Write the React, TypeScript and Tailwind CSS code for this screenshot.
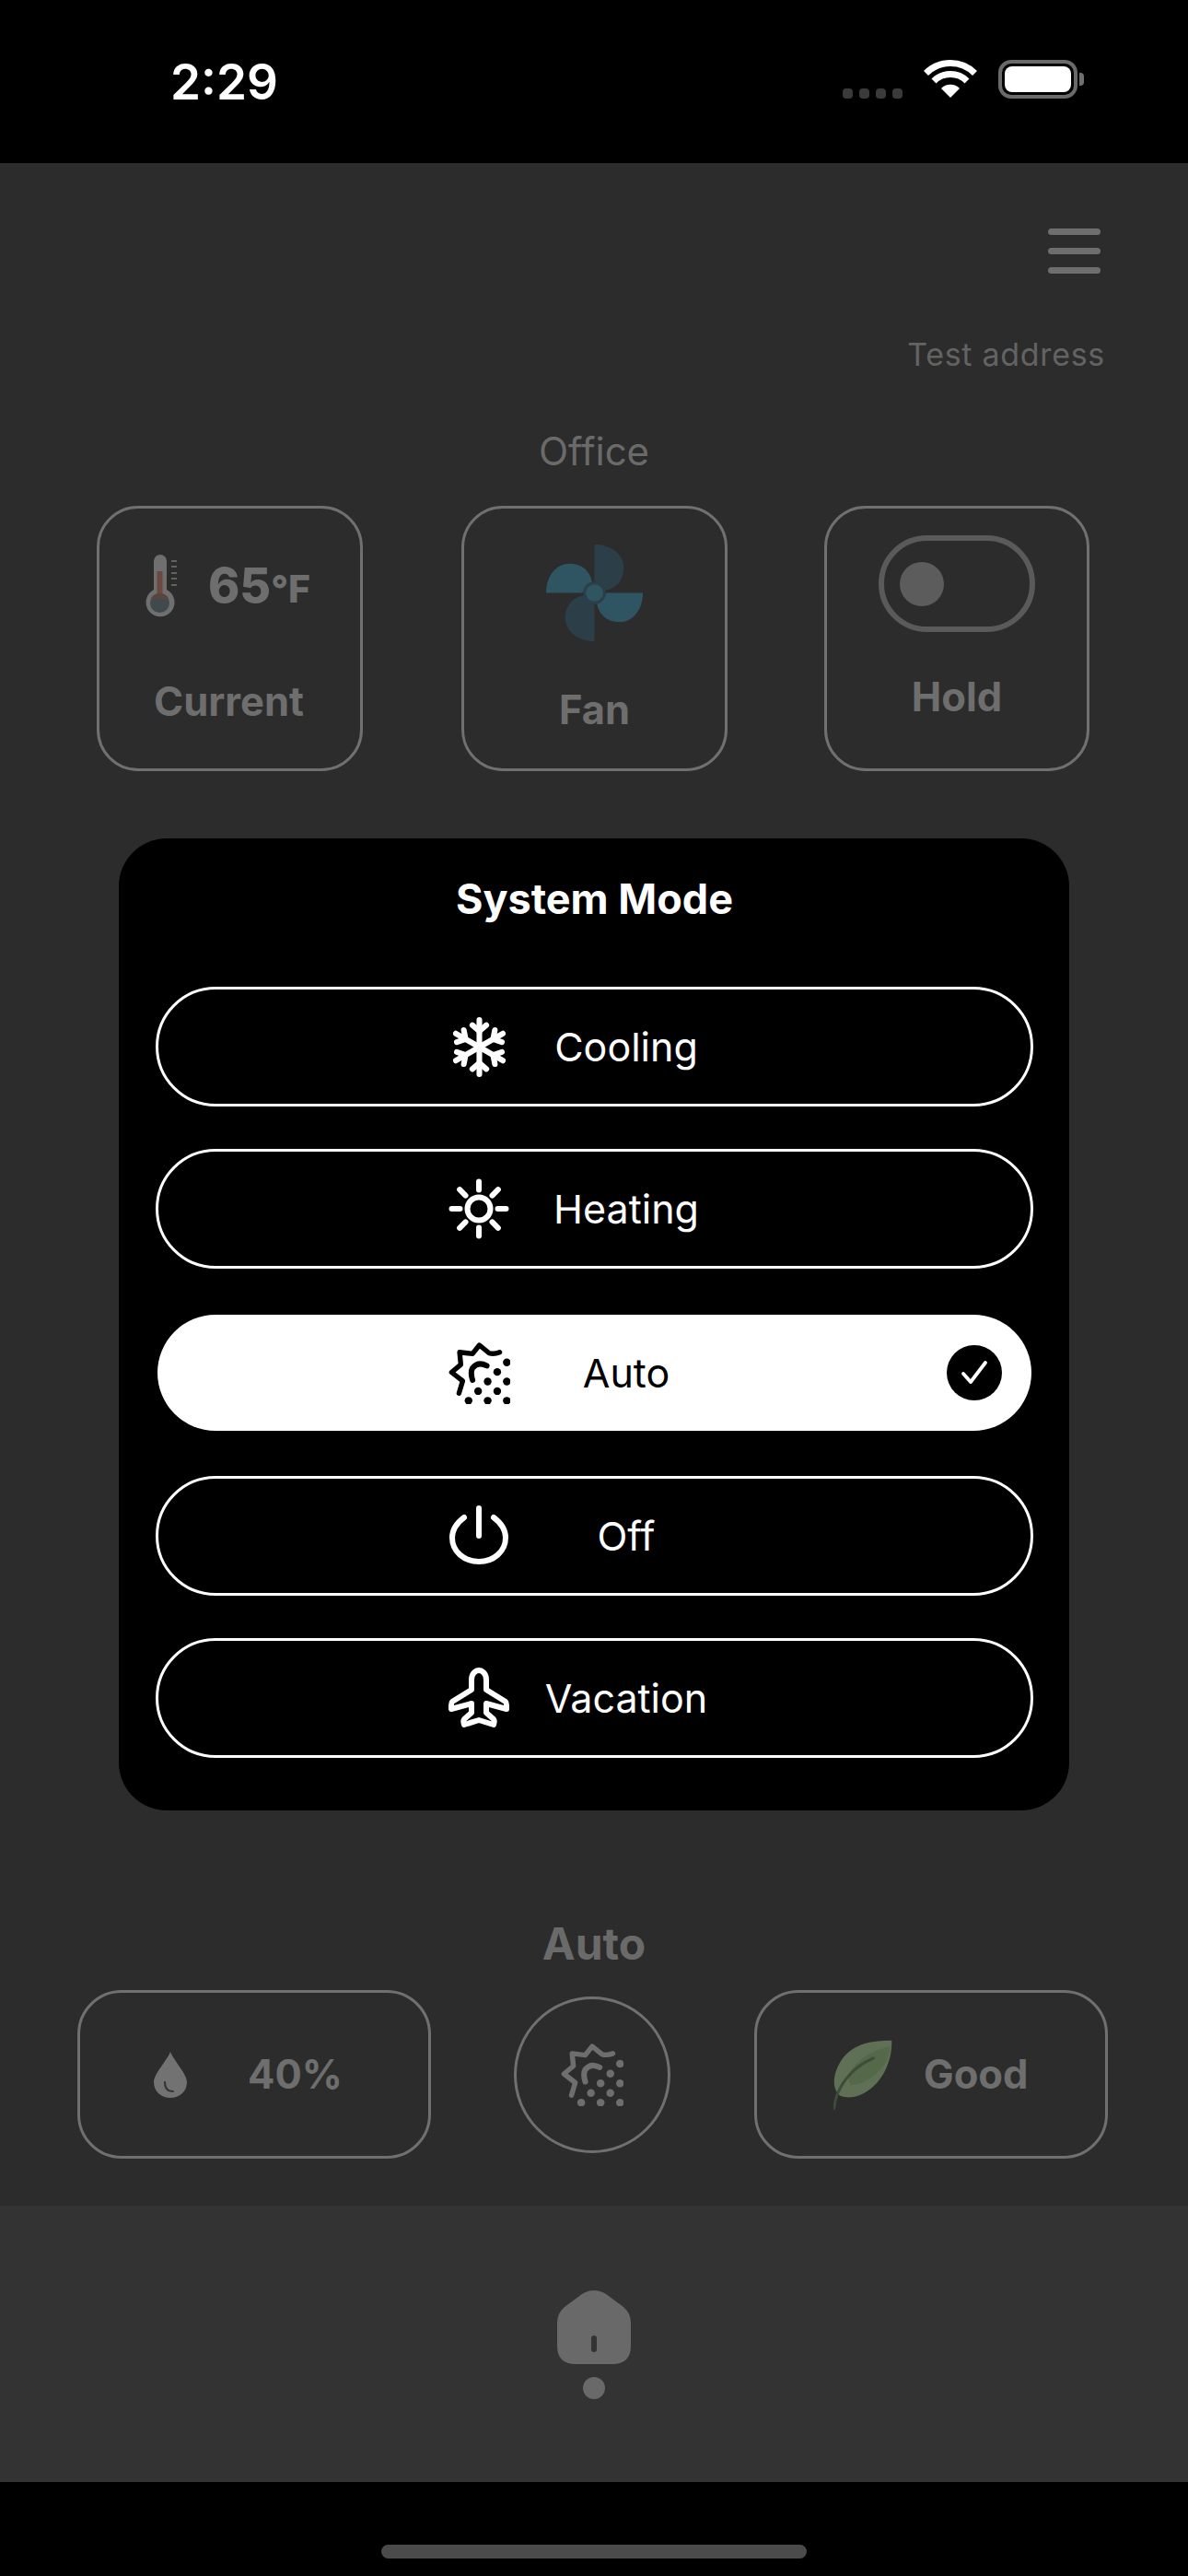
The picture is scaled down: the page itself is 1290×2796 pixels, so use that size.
import { ReactNode } from "react";

function AutoIcon({ className }: { className?: string }) {
  const dots = [
    [239, 80], [208, 111], [177, 142], [239, 142], [146, 173],
    [208, 173], [115, 204], [177, 204], [239, 204],
  ];
  return (
    <svg viewBox="50 15 200 200" className={className} fill="none" stroke="currentColor" strokeLinecap="round" strokeLinejoin="round">
      <path d="M216 47 Q198 54 182 50 L150 24 L128 52 L86 47 L90 87 L60 112 L96 140 L84 180" strokeWidth="16" />
      <path d="M174 91 Q146 76 128 98 Q120 112 128 137" strokeWidth="18" />
      {dots.map(([x, y]) => (
        <circle key={`${x}-${y}`} cx={x} cy={y} r="12.5" fill="currentColor" stroke="none" />
      ))}
    </svg>
  );
}

function SnowIcon() {
  return (
    <svg viewBox="0 0 60 66" className="w-[61px] h-[67px]" fill="none" stroke="currentColor" strokeWidth="6" strokeLinecap="round" strokeLinejoin="round">
      {[0, 60, 120, 180, 240, 300].map((a) => (
        <g key={a} transform={`rotate(${a} 30 33)`}>
          <path d="M30 33V4" />
          <path d="M22.5 9.5L30 16L37.5 9.5" />
        </g>
      ))}
    </svg>
  );
}

function SunIcon() {
  return (
    <svg viewBox="0 0 66 66" className="w-[66px] h-[66px]" fill="none" stroke="currentColor" strokeWidth="6" strokeLinecap="round">
      <circle cx="33" cy="33" r="12.5" />
      {[0, 45, 90, 135, 180, 225, 270, 315].map((a) => (
        <path key={a} d="M33 3.5V12.5" transform={`rotate(${a} 33 33)`} />
      ))}
    </svg>
  );
}

function PowerIcon() {
  return (
    <svg viewBox="0 0 64 64" className="w-[64px] h-[64px] mb-[3px]" fill="none" stroke="currentColor" strokeWidth="6" strokeLinecap="round">
      <path d="M32 3V33" />
      <path d="M16 13C8 19 3 26 3 35C3 50 16 61 32 61C48 61 61 50 61 35C61 26 56 19 48 13" />
    </svg>
  );
}

function PlaneIcon() {
  return (
    <svg viewBox="0 0 66 66" className="w-[66px] h-[66px]" fill="none" stroke="currentColor" strokeWidth="6" strokeLinecap="round" strokeLinejoin="round">
      <path d="M41 24L62 37C63 38 63 39 63 41V45L41 39V49L49 56C50 57 50 59 49 62L33 57L17 62C16 59 16 57 17 56L25 49V39L3 45V41C3 39 3 38 4 37L25 24V13C25 7 29 3 33 3C37 3 41 7 41 13Z" />
    </svg>
  );
}

function Thermometer() {
  return (
    <svg viewBox="0 0 34 68" className="w-[34px] h-[68px] shrink-0">
      <path d="M9 38V7a7 7 0 0 1 14 0V38a15.5 15.5 0 1 1-14 0Z" fill="#6f6f6f" />
      <circle cx="15.5" cy="52.5" r="10.5" fill="#3f4a4e" />
      <rect x="12.5" y="18" width="6" height="30" fill="#6a4a40" />
      <path d="M5.6 49a10.5 10.5 0 0 1 19.8 0Z" fill="#574640" />
      {[6, 12, 19, 25, 32].map((y) => (
        <rect key={y} x="28" y={y} width="6" height="2" fill="#626262" />
      ))}
    </svg>
  );
}

function Fan() {
  return (
    <svg viewBox="-157 -157 314 314" className="w-[105px] h-[105px]">
      {[
        { a: 0, c: "#2c3e47" },
        { a: 90, c: "#2f5563" },
        { a: 180, c: "#2c3e47" },
        { a: 270, c: "#2f5563" },
      ].map(({ a, c }) => (
        <path key={a} transform={`rotate(${a})`} d="M0 -157C55 -157 95 -125 95 -80C95 -40 70 -15 37 -8L0 -40Z" fill={c} />
      ))}
      <circle r="37" fill="#2c3e47" />
      <circle r="28" fill="#2f5563" />
    </svg>
  );
}

function Leaf() {
  return (
    <svg viewBox="78 38 192 228" className="w-[64px] h-[76px] shrink-0">
      <path d="M268 40C200 40 130 50 95 120C70 170 80 205 100 220C150 240 220 200 250 130C265 95 268 70 268 40Z" fill="#5f7054" />
      <path d="M262 60C220 70 170 90 140 130C125 150 125 170 135 185C180 185 225 150 250 110C258 90 261 75 262 60Z" fill="#53694a" />
      <path d="M80 262C85 200 130 130 208 98" fill="none" stroke="#3e4d3a" strokeWidth="9" strokeLinecap="round" />
    </svg>
  );
}

function Drop() {
  return (
    <svg viewBox="0 0 36 50" className="w-[36px] h-[50px] shrink-0">
      <path d="M18 0C22 10 36 24 36 33C36 43 28 50 18 50C8 50 0 43 0 33C0 24 14 10 18 0Z" fill="#727272" />
      <path d="M12 33C12 39 15 43 21 43" fill="none" stroke="#333333" strokeWidth="2" strokeLinecap="round" />
    </svg>
  );
}

function StatusIcons() {
  return (
    <div className="flex items-end">
      <div className="flex gap-[7px] mr-[23px]">
        {[0, 1, 2, 3].map((i) => (
          <div key={i} className="w-[11px] h-[11px] rounded-[4px] bg-[#3a3a3a]" />
        ))}
      </div>
      <svg viewBox="0 0 58 42" className="w-[58px] h-[42px] mr-[23px]">
        <path d="M2.5 14.5a37.5 37.5 0 0 1 53 0" fill="none" stroke="#fff" strokeWidth="7" />
        <path d="M11 23a25.5 25.5 0 0 1 36 0" fill="none" stroke="#fff" strokeWidth="7" />
        <path d="M19 31a14 14 0 0 1 20 0L29 41Z" fill="#fff" />
      </svg>
      <div className="flex items-center">
        <div className="w-[86px] h-[42px] rounded-[14px] border-4 border-[#6a6a6a] p-[3px]">
          <div className="w-full h-full rounded-[8px] bg-white" />
        </div>
        <div className="w-[5px] h-[14px] rounded-r-[4px] bg-[#6f6f6f] ml-[2px]" />
      </div>
    </div>
  );
}

function ModeRow({ icon, label, mt, selected }: { icon: ReactNode; label: string; mt: string; selected?: boolean }) {
  return (
    <div
      className={`flex items-center rounded-full ${mt} ${
        selected ? "h-[126px] mx-[2px] bg-white text-black pl-[314px]" : "h-[130px] border-[3px] border-white text-white pl-[313px]"
      }`}
    >
      <div className="w-[70px] flex justify-center shrink-0">{icon}</div>
      <div className="w-[250px] text-center text-[43px] leading-none font-[420]">{label}</div>
      {selected && (
        <div className="ml-auto mr-[32px] w-[60px] h-[60px] rounded-full bg-black flex items-center justify-center">
          <svg viewBox="0 0 32 32" className="w-[32px] h-[32px]" fill="none" stroke="#fff" strokeWidth="3.8" strokeLinecap="round" strokeLinejoin="round">
            <path d="M4 17L12 26L28 5" />
          </svg>
        </div>
      )}
    </div>
  );
}

export default function App() {
  return (
    <div className="relative w-[1290px] h-[2796px] flex flex-col bg-[#2c2c2c] overflow-hidden [font-family:Inter,sans-serif]">
      {/* Status bar */}
      <div className="h-[177px] shrink-0 bg-black flex items-start justify-between pl-[185px] pr-[113px] pt-[65px]">
        <span className="text-[53px] leading-[48px] font-semibold text-white">2:29</span>
        <StatusIcons />
      </div>

      {/* Screen behind the sheet */}
      <div className="flex-1 flex flex-col">
        <div className="flex justify-end pr-[95px] pt-[71px]">
          <div className="flex flex-col gap-[14px] w-[57px]">
            <div className="h-[7px] rounded-full bg-[#6e6e6e]" />
            <div className="h-[7px] rounded-full bg-[#6e6e6e]" />
            <div className="h-[7px] rounded-full bg-[#6e6e6e]" />
          </div>
        </div>
        <div className="mt-[68px] pr-[90px] text-right text-[34px] leading-[40px] tracking-[0.7px] text-[#636363]">Test address</div>
        <div className="mt-[60px] text-center text-[42px] leading-[50px] text-[#6a6a6a]">Office</div>

        <div className="mt-[34px] pl-[105px] flex">
          <div className="w-[289px] h-[288px] rounded-[45px] border-[3px] border-[#707070] flex flex-col items-center pt-[50px]">
            <div className="flex items-center gap-[34px] pr-[4px]">
              <Thermometer />
              <div className="flex items-baseline font-extrabold text-[#6e6e6e] leading-none">
                <span className="text-[52px]">65</span>
                <span className="text-[41px]">°F</span>
              </div>
            </div>
            <div className="mt-[70px] text-[43.5px] leading-none font-bold text-[#6e6e6e] pr-[2px]">Current</div>
          </div>
          <div className="ml-[107px] w-[289px] h-[288px] rounded-[45px] border-[3px] border-[#707070] flex flex-col items-center pt-[39px]">
            <Fan />
            <div className="mt-[53px] text-[43.5px] leading-none font-bold text-[#6e6e6e]">Fan</div>
          </div>
          <div className="ml-[105px] w-[288px] h-[288px] rounded-[45px] border-[3px] border-[#707070] flex flex-col items-center pt-[29px]">
            <div className="w-[170px] h-[105px] rounded-full border-[6px] border-[#5a5a5a] flex items-center pl-[17px]">
              <div className="w-[48px] h-[48px] rounded-full bg-[#5c5c5c]" />
            </div>
            <div className="mt-[49px] text-[43.5px] leading-none font-bold text-[#6e6e6e]">Hold</div>
          </div>
        </div>

        <div className="mt-[1247px] text-center text-[48px] leading-[52px] font-bold text-[#6a6a6a]">Auto</div>
        <div className="mt-[24px] pl-[84px] flex items-center">
          <div className="w-[384px] h-[183px] rounded-[48px] border-[3px] border-[#707070] flex items-center pl-[80px] gap-[66px]">
            <Drop />
            <span className="text-[43.5px] leading-none font-bold text-[#6e6e6e]">40%</span>
          </div>
          <div className="ml-[90px] w-[170px] h-[170px] rounded-full border-[3px] border-[#707070] flex items-center justify-center text-[#6e6e6e]">
            <AutoIcon className="w-[68px] h-[68px]" />
          </div>
          <div className="ml-[91px] w-[384px] h-[183px] rounded-[48px] border-[3px] border-[#707070] flex items-center pl-[83px] gap-[34px]">
            <Leaf />
            <span className="text-[43.5px] leading-none font-bold text-[#6e6e6e]">Good</span>
          </div>
        </div>
      </div>

      {/* Bottom nav */}
      <div className="h-[300px] shrink-0 bg-[#333333] flex flex-col items-center pt-[92px]">
        <svg viewBox="0 0 80 80" className="w-[80px] h-[80px]">
          <path d="M27 4Q40 -4 53 4L72 18Q80 25 80 35V60Q80 80 60 80H20Q0 80 0 60V35Q0 25 8 18Z" fill="#696969" />
          <rect x="37" y="49" width="6" height="18" rx="3" fill="#333333" />
        </svg>
        <div className="mt-[14px] w-[24px] h-[24px] rounded-full bg-[#696969]" />
      </div>
      <div className="h-[102px] shrink-0 bg-black flex justify-center pt-[68px]">
        <div className="w-[462px] h-[15px] rounded-full bg-[#4b4b4b]" />
      </div>

      {/* System mode sheet */}
      <div className="absolute left-[129px] top-[910px] w-[1032px] h-[1055px] rounded-[52px] bg-black pl-[40px] pr-[39px] pt-[41px]">
        <div className="text-center text-[45px] leading-[50px] font-bold text-white">System Mode</div>
        <ModeRow mt="mt-[70px]" icon={<SnowIcon />} label="Cooling" />
        <ModeRow mt="mt-[46px]" icon={<SunIcon />} label="Heating" />
        <ModeRow mt="mt-[50px]" selected icon={<AutoIcon className="w-[67px] h-[67px]" />} label="Auto" />
        <ModeRow mt="mt-[49px]" icon={<PowerIcon />} label="Off" />
        <ModeRow mt="mt-[46px]" icon={<PlaneIcon />} label="Vacation" />
      </div>
    </div>
  );
}
